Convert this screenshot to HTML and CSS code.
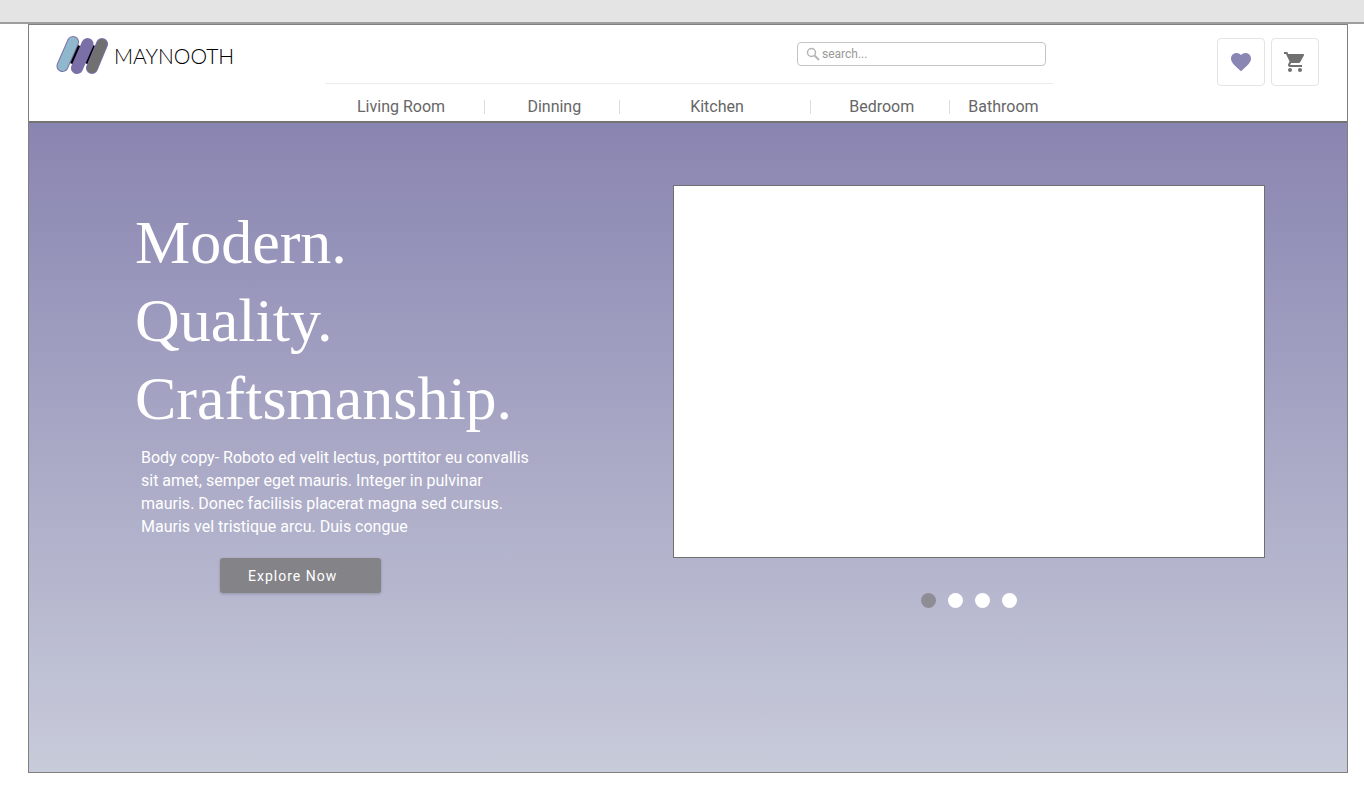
FILE: index.html
```html
<!DOCTYPE html>
<html lang="en">
<head>
  <meta charset="UTF-8">
  <meta name="viewport" content="width=device-width, initial-scale=1.0">
  <title>Maynooth</title>
  <link rel="stylesheet" href="styles.css">
</head>
<body>
  <div class="top-bar"></div>
  <div class="page">
    <header class="header">
      <a class="logo" href="#">
        <svg class="logo-mark" width="54" height="40" viewBox="0 0 54 40" aria-hidden="true">
          <path d="M14 28 L22 10 M29 28 L37 10" stroke="#000" stroke-width="7"/>
          <g stroke-linecap="round">
            <path d="M6.500 31 L17 7" stroke="#7b6fa8" stroke-width="12"/>
            <path d="M6.500 31 L17 7" stroke="#8fb8cc" stroke-width="10"/>
            <path d="M21 33 L31.500 9" stroke="#7b6fa8" stroke-width="12"/>
            <path d="M36 33 L46 9" stroke="#7b6fa8" stroke-width="12"/>
            <path d="M36 33 L46 9" stroke="#707070" stroke-width="10"/>
          </g>
        </svg>
        <span class="logo-text">MAYNOOTH</span>
      </a>

      <div class="header-center">
        <form class="search">
          <svg width="14" height="14" viewBox="0 0 14 14" fill="none" stroke="#b5b5b5" aria-hidden="true">
            <circle cx="5.500" cy="5.500" r="4" stroke-width="1.500"/>
            <path d="M8.500 8.500 L13 13" stroke-width="2"/>
          </svg>
          <input type="text" placeholder="search..." aria-label="Search">
        </form>
        <nav class="nav">
          <a href="#">Living Room</a>
          <a href="#">Dinning</a>
          <a href="#">Kitchen</a>
          <a href="#">Bedroom</a>
          <a href="#">Bathroom</a>
        </nav>
      </div>

      <div class="actions">
        <button class="icon-button" aria-label="Favourites">
          <svg width="24" height="24" viewBox="0 0 24 24" fill="#8a86b3">
            <path d="M12 21.350l-1.450-1.320C5.400 15.360 2 12.280 2 8.500 2 5.420 4.420 3 7.500 3c1.740 0 3.410.810 4.500 2.090C13.090 3.810 14.760 3 16.500 3 19.580 3 22 5.420 22 8.500c0 3.780-3.400 6.860-8.550 11.540L12 21.350z"/>
          </svg>
        </button>
        <button class="icon-button" aria-label="Cart">
          <svg width="24" height="24" viewBox="0 0 24 24" fill="#707070">
            <path d="M7 18c-1.100 0-1.990.900-1.990 2S5.900 22 7 22s2-.900 2-2-.900-2-2-2zM1 2v2h2l3.600 7.590-1.350 2.450c-.160.280-.250.610-.250.960 0 1.100.900 2 2 2h12v-2H7.420c-.140 0-.250-.110-.250-.250l.030-.120.900-1.630h7.450c.750 0 1.410-.410 1.750-1.030l3.580-6.490c.080-.140.120-.310.120-.480 0-.550-.450-1-1-1H5.210l-.940-2H1zm16 16c-1.100 0-1.990.900-1.990 2s.890 2 1.990 2 2-.900 2-2-.900-2-2-2z"/>
          </svg>
        </button>
      </div>
    </header>

    <main class="hero">
      <div class="hero-text">
        <h1>Modern.<br>Quality.<br>Craftsmanship.</h1>
        <p>Body copy- Roboto ed velit lectus, porttitor eu convallis sit amet, semper eget mauris. Integer in pulvinar mauris. Donec facilisis placerat magna sed cursus. Mauris vel tristique arcu. Duis congue</p>
        <button class="explore">Explore Now</button>
      </div>
      <div class="carousel">
        <div class="slide"></div>
        <div class="dots">
          <button class="dot active" aria-label="Slide 1"></button>
          <button class="dot" aria-label="Slide 2"></button>
          <button class="dot" aria-label="Slide 3"></button>
          <button class="dot" aria-label="Slide 4"></button>
        </div>
      </div>
    </main>
  </div>
</body>
</html>
```

FILE: styles.css
```css
* {
  box-sizing: border-box;
}

body {
  margin: 0;
  min-height: 100vh;
  display: flex;
  flex-direction: column;
  background-color: #fff;
  font-family: Roboto, sans-serif;
}

button {
  font-family: inherit;
  cursor: pointer;
}

.top-bar {
  height: 24px;
  background-color: #e4e4e4;
  border-bottom: 2px solid #9e9e9e;
}

.page {
  flex: 1;
  display: flex;
  flex-direction: column;
  margin: 0 16px 15px 28px;
  border: 1px solid #808080;
}

/* Header */
.header {
  display: grid;
  grid-template-columns: 296px 1fr 294px;
  border-bottom: 2px solid #737373;
}

.logo {
  display: flex;
  align-items: center;
  align-self: start;
  gap: 4px;
  padding: 10px 0 0 27px;
  color: #000;
  text-decoration: none;
}

.logo-text {
  font-family: Lato, sans-serif;
  font-size: 21px;
  font-weight: 300;
}

.search {
  display: flex;
  align-items: center;
  gap: 2px;
  width: 249px;
  height: 24px;
  margin: 17px 7px 17px auto;
  padding: 0 8px;
  border: 1px solid #c4c4c4;
  border-radius: 4px;
}

.search input {
  flex: 1;
  min-width: 0;
  padding: 0;
  border: none;
  outline: none;
  background: none;
  font-family: inherit;
  font-size: 12px;
  color: #707070;
}

.search input::placeholder {
  color: #999;
}

.nav {
  display: grid;
  grid-template-columns: 160fr 135fr 190fr 139fr 103fr;
  padding: 16px 0 7px;
  border-top: 1px solid #ececec;
}

.nav a {
  padding-left: 4px;
  border-right: 1px solid #dcdcdc;
  color: #666;
  font-size: 16px;
  line-height: 14px;
  text-align: center;
  text-decoration: none;
}

.nav a:first-child {
  padding-left: 32px;
  text-align: left;
}

.nav a:last-child {
  border-right: none;
}

.actions {
  display: flex;
  justify-content: flex-end;
  gap: 6px;
  padding: 13px 28px 0 0;
}

.icon-button {
  display: flex;
  justify-content: center;
  align-items: center;
  width: 48px;
  height: 48px;
  padding: 0;
  background-color: #fff;
  border: 1px solid #e4e4e4;
  border-radius: 4px;
}

/* Hero */
.hero {
  flex: 1;
  display: grid;
  grid-template-columns: 10fr 11fr;
  align-items: start;
  padding: 62px 82px 40px 106px;
  background: linear-gradient(#8985b1, #c8cbda);
}

.hero-text {
  padding-top: 18px;
  color: #fff;
}

.hero-text h1 {
  margin: 0 0 9px;
  font-family: "Liberation Serif", serif;
  font-size: 62px;
  font-weight: 400;
  line-height: 78px;
}

.hero-text p {
  max-width: 400px;
  margin: 0 0 20px;
  padding-left: 6px;
  font-size: 16px;
  line-height: 23px;
}

.explore {
  height: 35px;
  margin-left: 85px;
  padding: 0 44px 0 28px;
  background-color: #838388;
  border: none;
  border-radius: 3px;
  box-shadow: 0 1px 3px rgba(0, 0, 0, 0.2);
  color: #fff;
  font-size: 14px;
  letter-spacing: 1px;
}

.slide {
  aspect-ratio: 592 / 373;
  background-color: #fff;
  border: 1px solid #707070;
}

.dots {
  display: flex;
  justify-content: center;
  gap: 12px;
  margin-top: 35px;
}

.dot {
  width: 15px;
  height: 15px;
  padding: 0;
  border: none;
  border-radius: 50%;
  background-color: #fff;
}

.dot.active {
  background-color: #8e8d96;
}
```
